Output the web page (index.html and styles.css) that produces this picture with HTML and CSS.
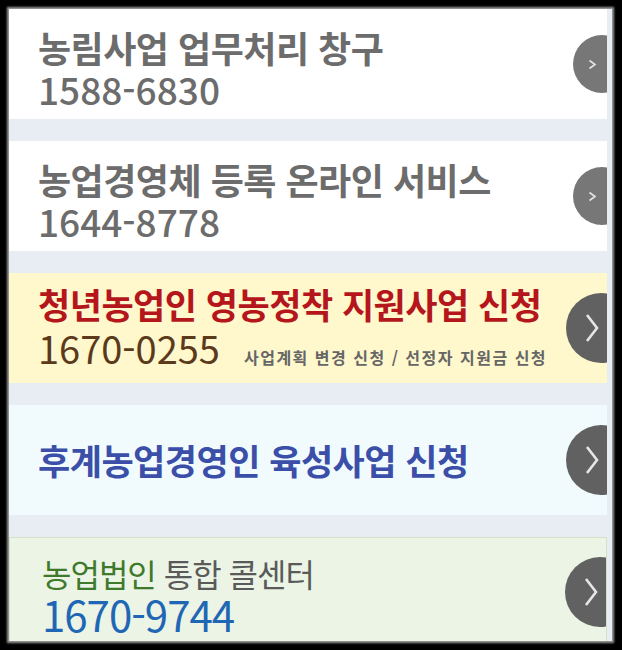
FILE: index.html
```html
<!DOCTYPE html>
<html lang="ko">
<head>
<meta charset="utf-8">
<link rel="stylesheet" href="styles.css">
</head>
<body>
<div class="frame">
  <div class="list">
    <a class="card card-white">
      <div class="txt two">
        <div class="title gray">농림사업 업무처리 창구</div>
        <div class="num gray">1588-6830</div>
      </div>
      <span class="go small"><svg width="9" height="11" viewBox="0 0 9 11"><polyline points="1.5,1.5 7,5.5 1.5,9.5" fill="none" stroke="#e4e4e4" stroke-width="1.6"/></svg></span>
    </a>
    <a class="card card-white">
      <div class="txt two">
        <div class="title gray">농업경영체 등록 온라인 서비스</div>
        <div class="num gray">1644-8778</div>
      </div>
      <span class="go small"><svg width="9" height="11" viewBox="0 0 9 11"><polyline points="1.5,1.5 7,5.5 1.5,9.5" fill="none" stroke="#e4e4e4" stroke-width="1.6"/></svg></span>
    </a>
    <a class="card card-yellow">
      <div class="txt three">
        <div class="title t35 red">청년농업인 영농정착 지원사업 신청</div>
        <div class="row">
          <span class="num brown">1670-0255</span>
          <span class="note">사업계획 변경 신청 / 선정자 지원금 신청</span>
        </div>
      </div>
      <span class="go big"><svg width="14" height="30" viewBox="0 0 14 30"><polyline points="2,2 12,15 2,28" fill="none" stroke="#e6e6e6" stroke-width="2.6"/></svg></span>
    </a>
    <a class="card card-cyan">
      <div class="txt">
        <div class="title t35 blue">후계농업경영인 육성사업 신청</div>
      </div>
      <span class="go big"><svg width="14" height="30" viewBox="0 0 14 30"><polyline points="2,2 12,15 2,28" fill="none" stroke="#e6e6e6" stroke-width="2.6"/></svg></span>
    </a>
    <a class="card card-green">
      <div class="txt five">
        <div class="title2"><span class="green">농업법인</span> 통합 콜센터</div>
        <div class="num2">1670-9744</div>
      </div>
      <span class="go big"><svg width="14" height="30" viewBox="0 0 14 30"><polyline points="2,2 12,15 2,28" fill="none" stroke="#e6e6e6" stroke-width="2.6"/></svg></span>
    </a>
  </div>
</div>
</body>
</html>
```
FILE: styles.css
```css
html, body {
  margin: 0;
  padding: 0;
  background: #000;
}
body {
  width: 622px;
  height: 650px;
  overflow: hidden;
  font-family: "Noto Sans CJK KR", "Noto Sans", sans-serif;
}
.frame {
  margin: 9px 10px 0 9px;
  height: 632px;
  background: #e8ecf3;
  padding-right: 5px;
  overflow: hidden;
  box-shadow: 0 0 2px 2px rgba(220, 220, 220, 0.7);
}
.list {
  display: flex;
  flex-direction: column;
  gap: 22px;
}
.card {
  display: flex;
  align-items: center;
  justify-content: space-between;
  height: 110px;
  flex: none;
  overflow: hidden;
  padding-left: 29px;
  box-sizing: border-box;
  text-decoration: none;
}
.card-white { background: #fff; }
.card-yellow { background: #fff8cc; }
.card-cyan { background: #f1fbfe; }
.card-green {
  background: #ecf4e6;
  border: 1px solid #d2e2c6;
  padding-left: 32px;
}
.txt {
  display: flex;
  flex-direction: column;
  white-space: nowrap;
}
.txt.two { padding-top: 7px; }
.txt.three { padding-bottom: 3px; }
.txt.five { padding-top: 3px; }
.title {
  font-weight: 700;
  font-size: 36px;
  line-height: 42px;
  letter-spacing: -0.5px;
}
.title.t35 { font-size: 35px; }
.num {
  font-size: 37px;
  line-height: 42px;
  font-weight: 500;
}
.gray { color: #6c6c6c; }
.red { color: #b4161c; }
.blue { color: #3b4fa8; }
.brown {
  color: #5b3a1c;
  font-weight: 400;
  font-size: 38px;
  line-height: 46px;
}
.row {
  display: flex;
  align-items: baseline;
  gap: 24px;
}
.note {
  font-size: 16px;
  font-weight: 700;
  color: #666;
  letter-spacing: 1.5px;
}
.title2 {
  font-size: 32px;
  line-height: 40px;
  color: #5a5a5a;
  letter-spacing: -1px;
}
.green { color: #3f7a2c; }
.num2 {
  font-size: 42px;
  line-height: 42px;
  color: #1f67b5;
  letter-spacing: -1px;
}
.go {
  flex: none;
  border-radius: 50%;
  display: flex;
  align-items: center;
  box-sizing: border-box;
}
.go.small {
  width: 58px;
  height: 58px;
  margin-right: -24px;
  background: #777;
  padding-left: 15px;
}
.go.big {
  width: 70px;
  height: 70px;
  margin-right: -29px;
  background: #616161;
  padding-left: 19px;
}
```
